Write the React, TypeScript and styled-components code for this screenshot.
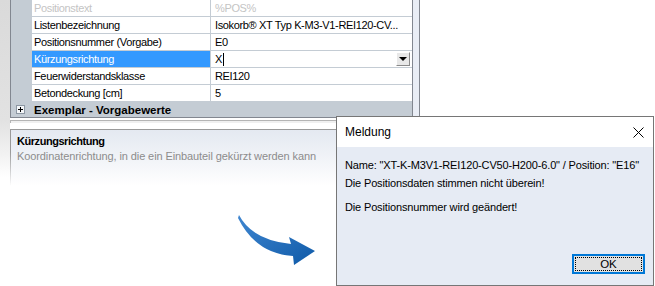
import React from "react";
import styled, { createGlobalStyle } from "styled-components";

const Global = createGlobalStyle`
  html, body { margin: 0; padding: 0; background: #ffffff; }
  body { font-family: "Liberation Sans", Arial, sans-serif; }
`;

const Page = styled.div`
  position: relative;
  width: 655px;
  height: 286px;
  overflow: hidden;
  background: #ffffff;
  display: flex;
  font-family: "Liberation Sans", Arial, sans-serif;
`;

const EdgeStrip = styled.div`
  width: 10px;
  flex: none;
  background: linear-gradient(to bottom, #dadada 0%, #e2e2e2 42%, #f2f2f2 54%, #ffffff 62%);
`;

const LeftPane = styled.div`
  width: 410px;
  flex: none;
  display: flex;
  flex-direction: column;
`;

const Grid = styled.div`
  display: flex;
  border-left: 1px solid #828790;
  border-right: 1px solid #828790;
  border-bottom: 1px solid #828790;
  background: #ffffff;
`;

const GridBody = styled.div`
  flex: 1;
  display: flex;
  flex-direction: column;
`;

const ScrollStrip = styled.div`
  width: 6px;
  flex: none;
  border-left: 1px solid #828790;
  background: #e9edf5;
`;

const Row = styled.div`
  display: grid;
  grid-template-columns: 21px 179px 1fr;
  height: 16px;
  border-bottom: 1px solid #c4ccd4;
  font-size: 11px;
  letter-spacing: -0.35px;
  line-height: 16px;
`;

const Margin = styled.div`
  background: #c4ccd4;
`;

const NameCell = styled.div<{ $selected?: boolean; $dim?: boolean }>`
  padding-left: 2px;
  border-right: 1px solid #c4ccd4;
  background: ${(p) => (p.$selected ? "#3399ff" : "#ffffff")};
  color: ${(p) => (p.$selected ? "#ffffff" : p.$dim ? "#c4c4c4" : "#000000")};
  white-space: nowrap;
  overflow: hidden;
`;

const ValueCell = styled.div<{ $dim?: boolean }>`
  position: relative;
  padding-left: 4px;
  color: ${(p) => (p.$dim ? "#c4c4c4" : "#000000")};
  white-space: nowrap;
  overflow: hidden;
  display: flex;
  align-items: center;
`;

const Caret = styled.span`
  display: inline-block;
  width: 1px;
  height: 13px;
  background: #000;
  margin-left: 1px;
`;

const DropButton = styled.div`
  position: absolute;
  right: 2px;
  top: 1px;
  width: 14px;
  height: 14px;
  box-sizing: border-box;
  background: #e8e8e8;
  border: 1px solid #ffffff;
  border-right-color: #8a8a8a;
  border-bottom-color: #8a8a8a;
  display: flex;
  align-items: center;
  justify-content: center;
  &::after {
    content: "";
    border-left: 4px solid transparent;
    border-right: 4px solid transparent;
    border-top: 4px solid #000;
  }
`;

const CategoryRow = styled.div`
  display: flex;
  align-items: center;
  height: 15px;
  background: #c4ccd4;
  font-size: 11.5px;
  font-weight: bold;
  color: #000;
`;

const PlusBox = styled.div`
  width: 9px;
  height: 9px;
  box-sizing: border-box;
  border: 1px solid #8c97a3;
  background: #f4f6f8;
  margin: 0 9px 0 5px;
  position: relative;
  &::before {
    content: "";
    position: absolute;
    left: 1px;
    top: 3px;
    width: 5px;
    height: 1px;
    background: #000;
  }
  &::after {
    content: "";
    position: absolute;
    left: 3px;
    top: 1px;
    width: 1px;
    height: 5px;
    background: #000;
  }
`;

const Splitter = styled.div`
  height: 2px;
  margin-top: 2px;
  border-top: 1px solid #b4b4b4;
  border-left: 1px solid #b4b4b4;
  background: #f0f0f0;
`;

const Description = styled.div`
  margin-top: 6px;
  height: 52px;
  border-top: 1px solid #9a9a9a;
  background:
    linear-gradient(to bottom, #9a9a9a 0%, #9a9a9a 40%, rgba(154, 154, 154, 0) 100%) left top / 1px 100% no-repeat,
    linear-gradient(to bottom, #e4e9f1 0%, #eef1f6 40%, #ffffff 100%);
  padding: 4px 0 0 7px;
`;

const DescTitle = styled.div`
  font-size: 11px;
  font-weight: bold;
  letter-spacing: -0.45px;
  color: #000;
  line-height: 14px;
`;

const DescText = styled.div`
  font-size: 11px;
  letter-spacing: -0.1px;
  color: #8c8c8c;
  line-height: 16px;
`;

const Arrow = styled.svg`
  position: absolute;
  left: 0;
  top: 0;
  pointer-events: none;
`;

const Dialog = styled.div`
  position: absolute;
  left: 336px;
  top: 116px;
  width: 318px;
  height: 170px;
  box-sizing: border-box;
  border: 1px solid #767676;
  background: #e6ebf4;
  display: flex;
  flex-direction: column;
`;

const TitleBar = styled.div`
  height: 30px;
  background: #ffffff;
  display: flex;
  align-items: center;
  justify-content: space-between;
  padding: 0 9px 0 8px;
  font-size: 12px;
  color: #000;
`;

const DialogBody = styled.div`
  flex: 1;
  display: flex;
  flex-direction: column;
  padding: 10px 8px 11px 8px;
  font-size: 11px;
  letter-spacing: -0.15px;
  color: #000;
`;

const Line = styled.div<{ $gap?: number }>`
  line-height: 16px;
  margin-top: ${(p) => p.$gap ?? 0}px;
  white-space: nowrap;
`;

const ButtonRow = styled.div`
  margin-top: auto;
  display: flex;
  justify-content: flex-end;
`;

const OkButton = styled.div`
  width: 73px;
  height: 20px;
  box-sizing: border-box;
  border: 2px solid #0078d7;
  background: #e1e1e1;
  padding: 1px;
  font-size: 11.5px;
  color: #000;
`;

const Focus = styled.div`
  height: 100%;
  box-sizing: border-box;
  border: 1px dotted #000;
  display: flex;
  align-items: center;
  justify-content: center;
`;

const rows = [
  { name: "Positionstext", value: "%POS%", dim: true },
  { name: "Listenbezeichnung", value: "Isokorb® XT Typ K-M3-V1-REI120-CV..." },
  { name: "Positionsnummer (Vorgabe)", value: "E0" },
  { name: "Kürzungsrichtung", value: "X", selected: true },
  { name: "Feuerwiderstandsklasse", value: "REI120" },
  { name: "Betondeckung [cm]", value: "5" },
];

export default function App() {
  return (
    <>
      <Global />
      <Page>
        <EdgeStrip />
        <LeftPane>
          <Grid>
            <GridBody>
              {rows.map((r) => (
                <Row key={r.name}>
                  <Margin />
                  <NameCell $selected={r.selected} $dim={r.dim}>
                    {r.name}
                  </NameCell>
                  <ValueCell $dim={r.dim}>
                    {r.value}
                    {r.selected && (
                      <>
                        <Caret />
                        <DropButton />
                      </>
                    )}
                  </ValueCell>
                </Row>
              ))}
              <CategoryRow>
                <PlusBox />
                Exemplar - Vorgabewerte
              </CategoryRow>
            </GridBody>
            <ScrollStrip />
          </Grid>
          <Splitter />
          <Description>
            <DescTitle>Kürzungsrichtung</DescTitle>
            <DescText>Koordinatenrichtung, in die ein Einbauteil gekürzt werden kann</DescText>
          </Description>
        </LeftPane>
        <Arrow width="655" height="286" viewBox="0 0 655 286">
          <defs>
            <linearGradient id="ag" x1="0" y1="0" x2="1" y2="1">
              <stop offset="0" stopColor="#3f86d0" />
              <stop offset="1" stopColor="#0f5aa8" />
            </linearGradient>
          </defs>
          <path
            d="M239 215 Q252 240 291 244 L289 237 L315 251 L294 265 L293 256 Q256 254 238 218 Z"
            fill="url(#ag)"
          />
        </Arrow>
        <Dialog>
          <TitleBar>
            <span>Meldung</span>
            <svg width="11" height="11" viewBox="0 0 11 11">
              <path d="M0.5 0.5 L10.5 10.5 M10.5 0.5 L0.5 10.5" stroke="#000" strokeWidth="1" />
            </svg>
          </TitleBar>
          <DialogBody>
            <Line>Name: "XT-K-M3V1-REI120-CV50-H200-6.0" / Position: "E16"</Line>
            <Line $gap={2}>Die Positionsdaten stimmen nicht überein!</Line>
            <Line $gap={8}>Die Positionsnummer wird geändert!</Line>
            <ButtonRow>
              <OkButton>
                <Focus>OK</Focus>
              </OkButton>
            </ButtonRow>
          </DialogBody>
        </Dialog>
      </Page>
    </>
  );
}
